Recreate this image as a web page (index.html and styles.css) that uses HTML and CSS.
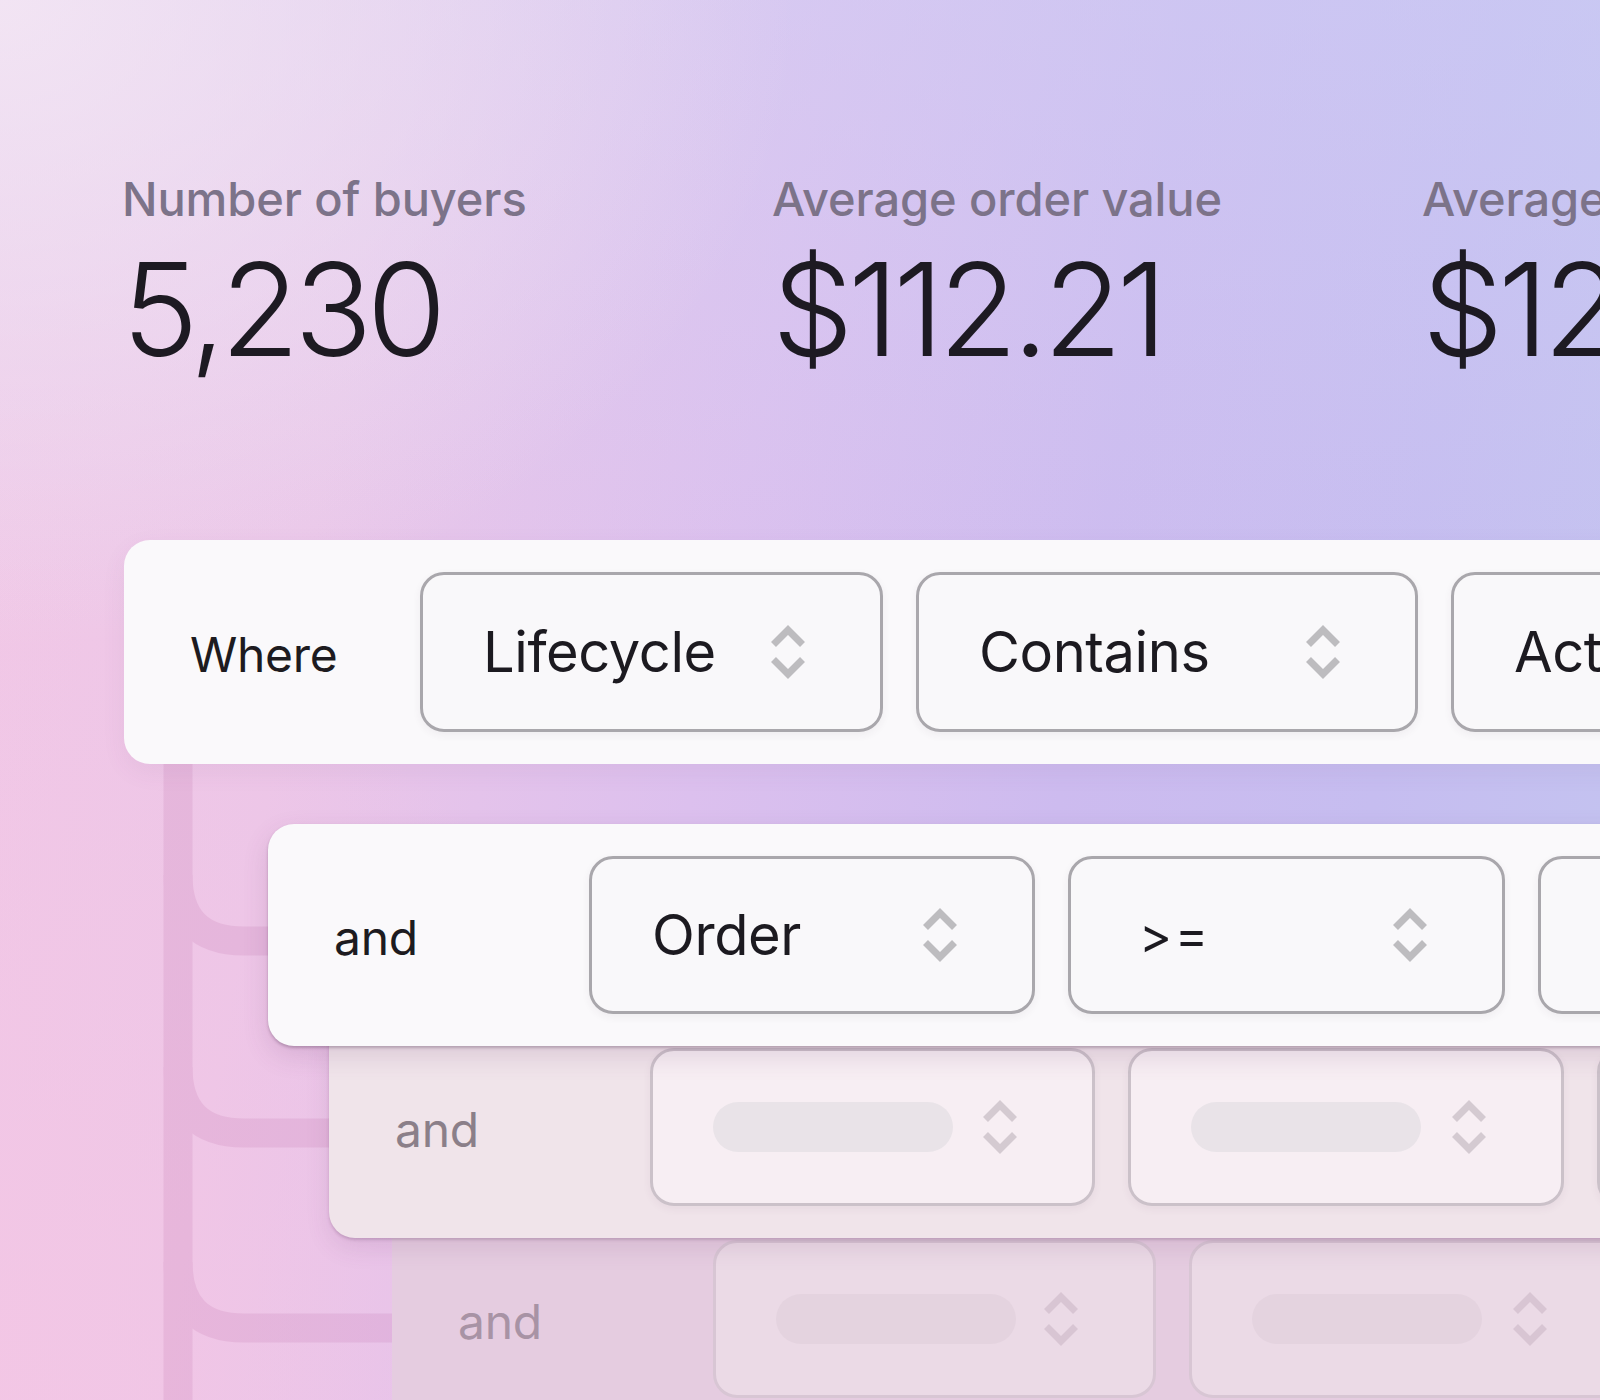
FILE: index.html
```html
<!DOCTYPE html>
<html lang="en">
<head>
<meta charset="utf-8">
<title>Segment filters</title>
<link rel="stylesheet" href="styles.css">
</head>
<body>
<main class="page">
  <section class="stats">
    <div class="stat">
      <div class="stat-label">Number of buyers</div>
      <div class="stat-value">5,230</div>
    </div>
    <div class="stat">
      <div class="stat-label">Average order value</div>
      <div class="stat-value">$112.21</div>
    </div>
    <div class="stat">
      <div class="stat-label">Average lifetime value</div>
      <div class="stat-value">$128.40</div>
    </div>
  </section>

  <section class="filters">
    <svg class="connector" width="420" height="700" viewBox="0 0 420 700" aria-hidden="true">
      <g fill="none" stroke="#b8609f" stroke-width="29" opacity="0.15">
        <path d="M178 0 V700"/>
        <path d="M178 111 Q178 177 244 177 H300"/>
        <path d="M178 303 Q178 369 244 369 H360"/>
        <path d="M178 498 Q178 564 244 564 H420"/>
      </g>
    </svg>

    <div class="row row--first">
      <div class="row-label">Where</div>
      <div class="select select--w463"><span class="select-text">Lifecycle</span><svg class="chev" viewBox="0 0 34 54"><path d="M2.5 19.5 L17 5 L31.5 19.5 M2.5 34.5 L17 49 L31.5 34.5"/></svg></div>
      <div class="select select--w502"><span class="select-text">Contains</span><svg class="chev" viewBox="0 0 34 54"><path d="M2.5 19.5 L17 5 L31.5 19.5 M2.5 34.5 L17 49 L31.5 34.5"/></svg></div>
      <div class="select select--w463"><span class="select-text">Active</span><svg class="chev" viewBox="0 0 34 54"><path d="M2.5 19.5 L17 5 L31.5 19.5 M2.5 34.5 L17 49 L31.5 34.5"/></svg></div>
    </div>

    <div class="row row--second">
      <div class="row-label">and</div>
      <div class="select select--w446"><span class="select-text">Order</span><svg class="chev" viewBox="0 0 34 54"><path d="M2.5 19.5 L17 5 L31.5 19.5 M2.5 34.5 L17 49 L31.5 34.5"/></svg></div>
      <div class="select select--w437"><span class="select-text select-text--op">&gt;=</span><svg class="chev" viewBox="0 0 34 54"><path d="M2.5 19.5 L17 5 L31.5 19.5 M2.5 34.5 L17 49 L31.5 34.5"/></svg></div>
      <div class="select select--w437"><span class="select-text">2</span><svg class="chev" viewBox="0 0 34 54"><path d="M2.5 19.5 L17 5 L31.5 19.5 M2.5 34.5 L17 49 L31.5 34.5"/></svg></div>
    </div>

    <div class="row row--third row--faded">
      <div class="row-label">and</div>
      <div class="select select--w445"><span class="pill pill--w240"></span><svg class="chev" viewBox="0 0 34 54"><path d="M2.5 19.5 L17 5 L31.5 19.5 M2.5 34.5 L17 49 L31.5 34.5"/></svg></div>
      <div class="select select--w436"><span class="pill pill--w230"></span><svg class="chev" viewBox="0 0 34 54"><path d="M2.5 19.5 L17 5 L31.5 19.5 M2.5 34.5 L17 49 L31.5 34.5"/></svg></div>
      <div class="select select--w436"><span class="pill pill--w230"></span><svg class="chev" viewBox="0 0 34 54"><path d="M2.5 19.5 L17 5 L31.5 19.5 M2.5 34.5 L17 49 L31.5 34.5"/></svg></div>
    </div>

    <div class="row row--fourth row--ghost">
      <div class="row-label">and</div>
      <div class="select select--w443"><span class="pill pill--w240"></span><svg class="chev" viewBox="0 0 34 54"><path d="M2.5 19.5 L17 5 L31.5 19.5 M2.5 34.5 L17 49 L31.5 34.5"/></svg></div>
      <div class="select select--w436"><span class="pill pill--w230"></span><svg class="chev" viewBox="0 0 34 54"><path d="M2.5 19.5 L17 5 L31.5 19.5 M2.5 34.5 L17 49 L31.5 34.5"/></svg></div>
      <div class="select select--w436"><span class="pill pill--w230"></span><svg class="chev" viewBox="0 0 34 54"><path d="M2.5 19.5 L17 5 L31.5 19.5 M2.5 34.5 L17 49 L31.5 34.5"/></svg></div>
    </div>
  </section>
</main>
</body>
</html>
```

FILE: styles.css
```css
html, body {
  margin: 0;
  padding: 0;
}

body {
  width: 1600px;
  height: 1400px;
  overflow: hidden;
  font-family: "Inter", "Noto Sans", "Liberation Sans", sans-serif;
  color: #1d1b22;
  background:
    radial-gradient(ellipse 800px 650px at 0% 0%, rgba(246, 234, 245, 0.8), rgba(246, 234, 245, 0) 100%),
    radial-gradient(ellipse 700px 800px at 0% 100%, rgba(244, 198, 228, 0.75), rgba(244, 198, 228, 0) 100%),
    linear-gradient(to bottom, rgba(206, 210, 246, 0.45) 0%, rgba(206, 210, 246, 0) 45%),
    linear-gradient(100deg, #f2c8e6 0%, #ecc6e8 22%, #dcc0ee 45%, #cdbbef 65%, #c6bdf0 82%, #c3c4f0 100%);
}

.page {
  width: 1600px;
  height: 1400px;
  overflow: hidden;
}

/* ---------- stats ---------- */
.stats {
  display: flex;
  padding: 175px 0 0 122px;
  width: 2400px;
}

.stat {
  flex: 0 0 650px;
  display: flex;
  flex-direction: column;
  gap: 22px;
}

.stat-label {
  font-size: 47px;
  line-height: 48px;
  font-weight: 500;
  color: #7c7389;
  letter-spacing: -0.1px;
  white-space: nowrap;
}

.stat-value {
  font-size: 129px;
  line-height: 129px;
  font-weight: 300;
  color: #1d1a22;
  letter-spacing: -5.5px;
  white-space: nowrap;
}

/* ---------- filters ---------- */
.filters {
  position: relative;
  margin-top: 166px;
  padding-left: 124px;
}

.connector {
  position: absolute;
  left: 0;
  top: 224px;
  z-index: 0;
}

.row {
  position: relative;
  display: flex;
  align-items: center;
  gap: 33px;
  width: 2400px;
  box-sizing: border-box;
  padding: 32px 0 32px 66px;
  border-radius: 26px;
  background: #faf9fb;
}

.row--first { z-index: 4; box-shadow: 0 8px 24px rgba(120, 70, 130, 0.07); }
.row--second {
  z-index: 3;
  margin: 60px 0 0 144px;
  box-shadow: 0 2px 3px rgba(70, 40, 70, 0.28), 0 10px 26px rgba(110, 60, 110, 0.16);
}
.row--third {
  z-index: 2;
  margin: -30px 0 0 205px;
  background: #f0e4ea;
  box-shadow: 0 2px 3px rgba(90, 50, 90, 0.22), 0 10px 24px rgba(110, 60, 110, 0.12);
}
.row--fourth {
  z-index: 1;
  margin: -30px 0 0 268px;
  background: #e5cce0;
}

.row-label {
  font-size: 48px;
  line-height: 60px;
  margin-top: 6px;
  font-weight: 400;
  letter-spacing: -0.3px;
  color: #1d1b20;
}
.row--first .row-label { width: 197px; }
.row--second .row-label,
.row--third .row-label,
.row--fourth .row-label { width: 222px; }

.row--faded .row-label { color: #8b7f89; }
.row--ghost .row-label { color: #a893a5; }

.select {
  flex: 0 0 auto;
  box-sizing: border-box;
  height: 160px;
  display: flex;
  align-items: center;
  justify-content: space-between;
  padding: 0 75px 0 60px;
  border: 3px solid #a9a7ac;
  border-radius: 24px;
  background: #f9f8fa;
  box-shadow: 0 3px 8px rgba(60, 50, 70, 0.06);
}
.row--second .select,
.row--third .select,
.row--fourth .select { height: 158px; }

.select--w463 { width: 463px; }
.select--w502 { width: 502px; }
.select--w446 { width: 446px; }
.select--w445 { width: 445px; }
.select--w443 { width: 443px; }
.select--w437 { width: 437px; }
.select--w436 { width: 436px; }

.select-text {
  font-size: 56px;
  line-height: 70px;
  font-weight: 400;
  letter-spacing: -0.4px;
  color: #1c1a20;
  white-space: nowrap;
}
.select-text--op {
  padding-left: 8px;
  font-size: 50px;
  letter-spacing: 3px;
}

.chev {
  width: 34px;
  height: 54px;
  flex: 0 0 34px;
}
.chev path {
  fill: none;
  stroke: #bdbcbf;
  stroke-width: 7;
  stroke-linejoin: miter;
}

.pill {
  display: block;
  height: 50px;
  border-radius: 25px;
}
.pill--w240 { width: 240px; }
.pill--w230 { width: 230px; }

.row--faded .select {
  background: #f7eef3;
  border-color: #cbc1c9;
  box-shadow: 0 3px 8px rgba(80, 50, 80, 0.06);
}
.row--faded .pill { background: #e9e3e8; }
.row--faded .chev path { stroke: #d4cad1; }

.row--ghost .select {
  background: #ebdae6;
  border-color: #d8c6d4;
  box-shadow: none;
}
.row--ghost .pill { background: #e4d3df; }
.row--ghost .chev path { stroke: #d8c5d3; }
```
